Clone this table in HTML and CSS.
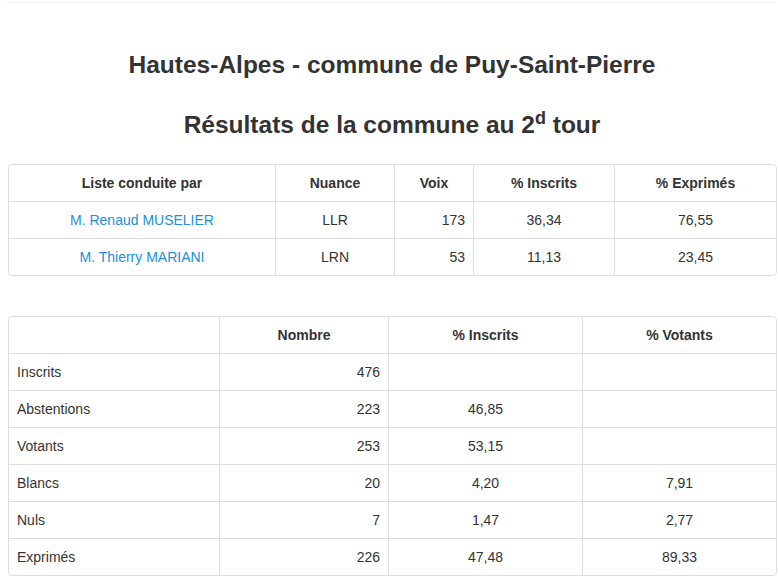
FILE: index.html
```html
<!DOCTYPE html>
<html lang="fr">
<head>
<meta charset="utf-8">
<title>Résultats</title>
<link rel="stylesheet" href="styles.css">
</head>
<body>
<hr class="sep">
<h2 class="title">Hautes-Alpes - commune de Puy-Saint-Pierre</h2>
<h3 class="subtitle">Résultats de la commune au 2<sup>d</sup> tour</h3>
<table class="tbl tbl-cand">
  <thead>
    <tr><th class="c1">Liste conduite par</th><th class="c2">Nuance</th><th class="c3">Voix</th><th class="c4">% Inscrits</th><th class="c5">% Exprimés</th></tr>
  </thead>
  <tbody>
    <tr><td class="center"><a href="#">M. Renaud MUSELIER</a></td><td class="center">LLR</td><td class="right">173</td><td class="center">36,34</td><td class="center">76,55</td></tr>
    <tr><td class="center"><a href="#">M. Thierry MARIANI</a></td><td class="center">LRN</td><td class="right">53</td><td class="center">11,13</td><td class="center">23,45</td></tr>
  </tbody>
</table>
<table class="tbl tbl-stats">
  <thead>
    <tr><th class="s1"></th><th class="s2">Nombre</th><th class="s3">% Inscrits</th><th class="s4">% Votants</th></tr>
  </thead>
  <tbody>
    <tr><td>Inscrits</td><td class="right">476</td><td class="center"></td><td class="center"></td></tr>
    <tr><td>Abstentions</td><td class="right">223</td><td class="center">46,85</td><td class="center"></td></tr>
    <tr><td>Votants</td><td class="right">253</td><td class="center">53,15</td><td class="center"></td></tr>
    <tr><td>Blancs</td><td class="right">20</td><td class="center">4,20</td><td class="center">7,91</td></tr>
    <tr><td>Nuls</td><td class="right">7</td><td class="center">1,47</td><td class="center">2,77</td></tr>
    <tr><td>Exprimés</td><td class="right">226</td><td class="center">47,48</td><td class="center">89,33</td></tr>
  </tbody>
</table>
</body>
</html>
```
FILE: styles.css
```css
html, body {
  margin: 0;
  padding: 0;
  background: #fff;
}
body {
  padding: 2px 2px 0 8px;
  font-family: "Liberation Sans", Arial, Helvetica, sans-serif;
  font-size: 14px;
  line-height: 20px;
  color: #333;
}
.sep {
  margin: 0 0 0 -1px;
  border: 0;
  border-top: 1px solid #eee;
  height: 0;
}
.title {
  margin: 40px 0 0;
  text-align: center;
  font-size: 24.5px;
  line-height: 44px;
  font-weight: bold;
}
.subtitle {
  margin: 16px 0 0;
  text-align: center;
  font-size: 24.5px;
  line-height: 44px;
  font-weight: bold;
}
.subtitle sup {
  font-size: 18px;
  line-height: 0;
  position: relative;
  vertical-align: baseline;
  top: -9px;
}
.tbl {
  width: 769px;
  border-collapse: separate;
  border-spacing: 0;
  border: 1px solid #ddd;
  border-radius: 4px;
  table-layout: fixed;
}
.tbl th, .tbl td {
  padding: 8px;
  line-height: 20px;
  border-right: 1px solid #ddd;
  border-bottom: 1px solid #ddd;
  white-space: nowrap;
}
.tbl th:last-child, .tbl td:last-child { border-right: 0; }
.tbl tbody tr:last-child td { border-bottom: 0; }
.tbl th {
  font-weight: bold;
  text-align: center;
}
.tbl-cand { margin-top: 17px; }
.tbl-stats { margin-top: 40px; }
.center { text-align: center; }
.right { text-align: right; }
.tbl a { color: #218fd9; text-decoration: none; }
.c1 { width: 250px; }
.c2 { width: 102px; }
.c3 { width: 62px; }
.c4 { width: 124px; }
.c5 { width: auto; }
.s1 { width: 194px; }
.s2 { width: 152px; }
.s3 { width: 177px; }
.s4 { width: auto; }
```
